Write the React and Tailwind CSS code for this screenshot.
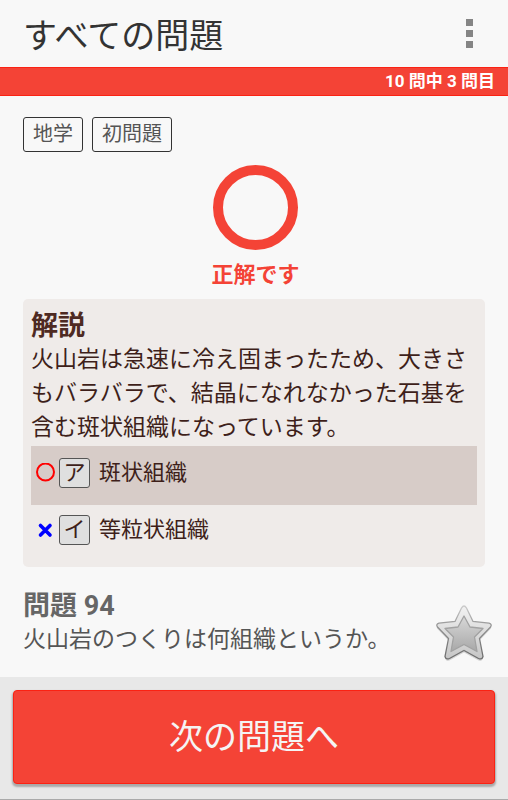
import React from "react";

const answers = [
  { key: "ア", text: "斑状組織", correct: true },
  { key: "イ", text: "等粒状組織", correct: false },
];

function Mark({ correct }) {
  return correct ? (
    <svg width="20" height="20" viewBox="0 0 20 20" role="img" aria-label="正解">
      <circle cx="9.5" cy="9" r="8.5" fill="none" stroke="#ff0000" strokeWidth="2" />
    </svg>
  ) : (
    <svg width="20" height="20" viewBox="0 0 20 20" role="img" aria-label="不正解">
      <path
        d="M4.5 5.5 L14 15 M14 5.5 L4.5 15"
        stroke="#0000ff"
        strokeWidth="3.6"
        strokeLinecap="round"
      />
    </svg>
  );
}

function Star() {
  return (
    <svg width="58" height="58" viewBox="0 0 58 58" aria-hidden="true">
      <defs>
        <linearGradient id="starRim" x1="0" y1="0" x2="0" y2="1">
          <stop offset="0" stopColor="#f2f2f2" />
          <stop offset="1" stopColor="#c6c6c6" />
        </linearGradient>
        <linearGradient id="starEdge" x1="0" y1="0" x2="0" y2="1">
          <stop offset="0" stopColor="#cccccc" />
          <stop offset="0.4" stopColor="#929292" />
          <stop offset="1" stopColor="#6c6c6c" />
        </linearGradient>
        <linearGradient id="starFill" x1="0" y1="0" x2="0" y2="1">
          <stop offset="0" stopColor="#d8d8d8" />
          <stop offset="1" stopColor="#a8a8a8" />
        </linearGradient>
      </defs>
      <path
        d="M26.5 3 Q29 -1 31.5 3 L38 16.5 L54 18.2 Q57.5 19.5 55.5 22 L44.5 33.5 L48 51.5 Q47 55 43.5 53.5 L29 45.5 L14.5 53.5 Q11 55 10 51.5 L13.5 33.5 L2.5 22 Q0.5 19.5 4 18.2 L20 16.5 Z"
        fill="#000000"
        opacity="0.14"
        transform="translate(0 2)"
      />
      <path
        d="M26.5 3 Q29 -1 31.5 3 L38 16.5 L54 18.2 Q57.5 19.5 55.5 22 L44.5 33.5 L48 51.5 Q47 55 43.5 53.5 L29 45.5 L14.5 53.5 Q11 55 10 51.5 L13.5 33.5 L2.5 22 Q0.5 19.5 4 18.2 L20 16.5 Z"
        fill="url(#starRim)"
        stroke="url(#starEdge)"
        strokeWidth="1.3"
      />
      <path
        d="M29 11 L35 22 L48 23.5 L39.5 32 L42 46.5 L29 39.5 L16 46.5 L18.5 32 L10 23.5 L23 22 Z"
        fill="url(#starFill)"
        stroke="#a2a2a2"
        strokeWidth="1.3"
        strokeLinejoin="round"
      />
    </svg>
  );
}

export default function App() {
  return (
    <div className="flex min-h-screen flex-col bg-[#f8f8f8] font-[Roboto,'Noto_Sans_CJK_JP',sans-serif] text-[#555555]">
      <header className="flex h-[67px] items-center justify-between pt-1 pr-[27px] pl-[23px]">
        <h1 className="text-[34px] leading-[62px] text-[#333333]">すべての問題</h1>
        <button type="button" aria-label="メニュー" className="mb-1 flex flex-col gap-1 px-2 py-2">
          <span className="size-[7px] bg-[#858585]" />
          <span className="size-[7px] bg-[#858585]" />
          <span className="size-[7px] bg-[#858585]" />
        </button>
      </header>

      <p className="border-y border-[#fb2213] bg-[#f44336] pr-[13px] text-right text-[17px] leading-[27px] font-bold text-white">
        10 問中 3 問目
      </p>

      <main className="flex-1 px-[23px] pt-[21px]">
        <ul className="flex gap-[9px] text-[20px] leading-[33px]">
          <li className="rounded-[3px] border border-[#333333] px-[9px]">地学</li>
          <li className="rounded-[3px] border border-[#333333] px-[9px]">初問題</li>
        </ul>

        <div className="mt-[13px] flex flex-col items-center gap-2 pl-[3px] text-[#f44336]">
          <div className="size-[85px] rounded-full border-[10px] border-[#f44336]" />
          <p className="text-[22px] leading-[34px] font-bold">正解です</p>
        </div>

        <section className="mt-[7px] rounded-[5px] bg-[#efebe9] px-2 pt-[10px] pb-[3px] text-[#3e1f1a]">
          <h2 className="text-[27px] leading-[34px] font-bold text-[#4e2a22]">解説</h2>
          <p className="text-[23px] leading-[34px]">
            火山岩は急速に冷え固まったため、大きさもバラバラで、結晶になれなかった石基を含む斑状組織になっています。
          </p>
          <ul className="mt-px text-[22px]">
            {answers.map((a) => (
              <li
                key={a.key}
                className={
                  a.correct
                    ? "flex h-[59px] items-center bg-[#d7ccc8] pb-[6px] pl-[5px]"
                    : "flex h-[59px] items-center pb-[10px] pl-[5px]"
                }
              >
                <Mark correct={a.correct} />
                <span className="ml-[3px] flex h-[30px] w-[31px] items-center justify-center rounded-[3px] border border-[#555555] bg-[#dfdfdf]">
                  {a.key}
                </span>
                <span className="ml-[9px]">{a.text}</span>
              </li>
            ))}
          </ul>
        </section>

        <section className="mt-[22px] flex justify-between">
          <div>
            <h2 className="text-[27px] leading-[34px] font-bold text-[#666666]">問題 94</h2>
            <p className="text-[23px] leading-[34px]">火山岩のつくりは何組織というか。</p>
          </div>
          <button type="button" aria-label="お気に入り" className="mt-4 -mr-2 h-[58px] shrink-0">
            <Star />
          </button>
        </section>
      </main>

      <footer className="border-b border-[#aaaaaa] bg-[#e8e8e8] px-[13px] pt-[13px] pb-[15px]">
        <button
          type="button"
          className="block h-[94px] w-full rounded-[4px] border border-[#fb2213] bg-[#f44336] text-[34px] text-[#f4f4f4] shadow-[0_2px_2px_1px_#a9a9a9]"
        >
          次の問題へ
        </button>
      </footer>
    </div>
  );
}
